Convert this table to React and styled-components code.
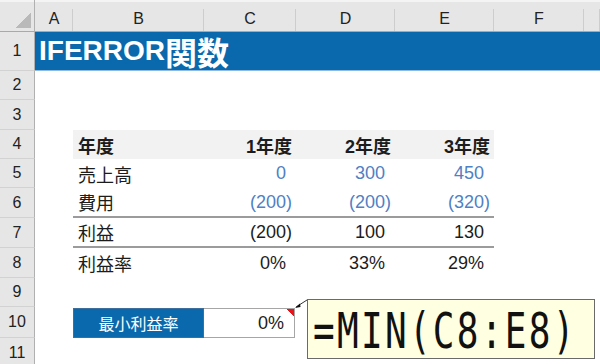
import React from 'react';
import styled, { createGlobalStyle } from 'styled-components';

const GlobalStyle = createGlobalStyle`
  html, body { margin: 0; padding: 0; background: #fff; }
  * { box-sizing: border-box; }
`;

const Sheet = styled.div`
  position: relative;
  width: 600px;
  height: 364px;
  overflow: hidden;
  background: #fff;
  display: grid;
  grid-template-columns: 35px 38px 131px 92px 99px 99px 90px 1fr;
  grid-template-rows: 32px 39px 29px 30px 29px 29px 30px 30px 30px 29px 31px 30px;
  font-family: "Liberation Sans", "Noto Sans CJK JP", sans-serif;
  color: #1c1c1c;
`;

const Corner = styled.div`
  background:
    linear-gradient(to top left, #b9b9b9 50%, transparent 50%) right 3px bottom 3px / 16px 16px no-repeat,
    linear-gradient(#f4f4f4, #f4f4f4) top / 100% 2px no-repeat,
    #e6e6e6;
  border-right: 1px solid #b0b0b0;
  border-bottom: 1px solid #a9a9a9;
`;

const ColHead = styled.div`
  display: flex;
  align-items: flex-end;
  justify-content: center;
  padding-bottom: 3px;
  font-size: 16px;
  color: #222;
  background:
    linear-gradient(to bottom, transparent 9px, #cdcdcd 9px) right / 1px 100% no-repeat,
    linear-gradient(#f4f4f4, #f4f4f4) top / 100% 2px no-repeat,
    #e6e6e6;
  border-bottom: 1px solid #a9a9a9;
`;

const RowNum = styled.div`
  display: flex;
  align-items: center;
  justify-content: center;
  font-size: 16px;
  color: #222;
  background: #e6e6e6;
  border-right: 1px solid #b0b0b0;
  border-bottom: 1px solid #d2d2d2;
`;

const Title = styled.div`
  grid-column: 2 / -1;
  display: flex;
  align-items: center;
  padding-left: 4px;
  background: #0a69ad;
  border-bottom: 1px solid #8dbbe2;
  color: #fff;
  font-weight: bold;
  font-size: 28px;
  white-space: nowrap;

  span {
    font-size: 32px;
    font-family: "Noto Sans CJK JP", sans-serif;
  }
`;

const Blank = styled.div`
  grid-column: ${p => p.$span || 'auto'};
`;

const Cell = styled.div`
  display: flex;
  align-items: center;
  justify-content: ${p => (p.$label ? 'flex-start' : 'flex-end')};
  padding-left: ${p => (p.$label ? '5px' : '0')};
  padding-right: ${p => (p.$label ? '0' : p.$paren ? '4px' : '10px')};
  font-size: 18px;
  font-weight: ${p => (p.$head ? 'bold' : 'normal')};
  color: ${p => (p.$blue ? '#4f80c4' : '#1c1c1c')};
  background: ${p => (p.$head ? '#f2f2f2' : 'transparent')};
  border-bottom: ${p => (p.$rule ? '2px solid #9b9b9b' : 'none')};
  white-space: nowrap;
`;

const KeyLabel = styled.div`
  display: flex;
  align-items: center;
  justify-content: center;
  margin-top: 1px;
  background: #0a69ad;
  border: 1px solid #3e6f9c;
  color: #fff;
  font-size: 16px;
  font-family: "Noto Sans CJK JP", sans-serif;
`;

const KeyValue = styled.div`
  position: relative;
  display: flex;
  align-items: center;
  justify-content: flex-end;
  padding-right: 10px;
  margin-top: 1px;
  margin-right: 1px;
  border: 1px solid #a6a6a6;
  border-left: none;
  font-size: 18px;

  &::after {
    content: '';
    position: absolute;
    top: 0;
    right: 0;
    width: 8px;
    height: 8px;
    background: linear-gradient(to bottom left, #e8141b 50%, transparent 50%);
  }
`;

const Note = styled.div`
  position: absolute;
  left: 307px;
  top: 299px;
  width: 288px;
  height: 60px;
  display: flex;
  align-items: center;
  padding: 5px 0 0 5px;
  background: #ffffe1;
  border: 1px solid #6a6a6a;
  font-family: "DejaVu Sans Mono", "Liberation Mono", monospace;
  font-size: 36px;
  letter-spacing: 2.3px;
  color: #111;
  white-space: nowrap;

  span {
    display: inline-block;
    transform: scaleY(1.36);
  }
`;

const Leader = styled.svg`
  position: absolute;
  left: 292px;
  top: 296px;
`;

const cols = ['A', 'B', 'C', 'D', 'E', 'F', ''];

const rows = [
  { label: '年度', values: ['1年度', '2年度', '3年度'], head: true },
  { label: '売上高', values: ['0', '300', '450'], blue: true },
  { label: '費用', values: ['(200)', '(200)', '(320)'], blue: true, rule: true },
  { label: '利益', values: ['(200)', '100', '130'], rule: true },
  { label: '利益率', values: ['0%', '33%', '29%'] },
];

function App() {
  return (
    <>
      <GlobalStyle />
      <Sheet>
        <Corner />
        {cols.map((c, i) => (
          <ColHead key={i}>{c}</ColHead>
        ))}

        <RowNum>1</RowNum>
        <Title>
          IFERROR<span>関数</span>
        </Title>

        <RowNum>2</RowNum>
        <Blank $span="2 / -1" />
        <RowNum>3</RowNum>
        <Blank $span="2 / -1" />

        {rows.map((r, i) => (
          <React.Fragment key={r.label}>
            <RowNum>{i + 4}</RowNum>
            <Blank />
            <Cell $label $head={r.head} $rule={r.rule}>
              {r.label}
            </Cell>
            {r.values.map((v, j) => (
              <Cell
                key={j}
                $head={r.head}
                $blue={r.blue}
                $rule={r.rule}
                $paren={r.head || v.startsWith('(')}
              >
                {v}
              </Cell>
            ))}
            <Blank $span="7 / -1" />
          </React.Fragment>
        ))}

        <RowNum>9</RowNum>
        <Blank $span="2 / -1" />

        <RowNum>10</RowNum>
        <Blank />
        <KeyLabel>最小利益率</KeyLabel>
        <KeyValue>0%</KeyValue>
        <Blank $span="5 / -1" />

        <RowNum>11</RowNum>
        <Blank $span="2 / -1" />

        <Leader width="18" height="16" viewBox="0 0 18 16">
          <line x1="4" y1="11" x2="15" y2="4" stroke="#333" strokeWidth="1" />
          <polygon points="3,12 8,7.5 8.5,11" fill="#111" />
        </Leader>
        <Note>
          <span>=MIN(C8:E8)</span>
        </Note>
      </Sheet>
    </>
  );
}

export default App;
